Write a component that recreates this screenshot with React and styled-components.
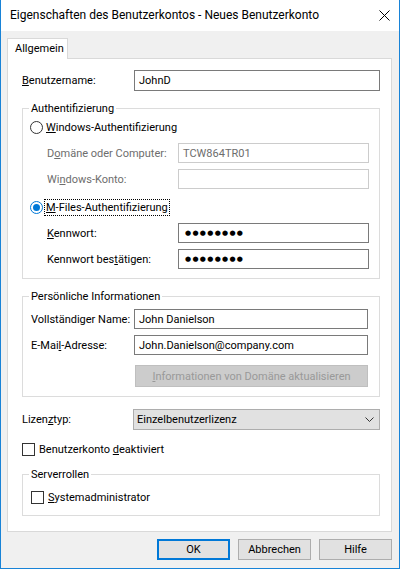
import React from 'react';
import styled, { createGlobalStyle } from 'styled-components';

const FS = '11px';

const GlobalStyle = createGlobalStyle`
  html, body { margin: 0; padding: 0; background: #ffffff; }
  body {
    font-family: Roboto, "Noto Sans", sans-serif;
    font-size: ${FS};
    color: #000;
  }
  * { box-sizing: border-box; }
`;

const Window = styled.div`
  width: 400px;
  height: 569px;
  border: 1px solid #1883d7;
  border-top: none;
  display: flex;
  flex-direction: column;
  background: #f0f0f0;
`;

const TitleBar = styled.div`
  height: 31px;
  flex: none;
  background: #ffffff;
  display: flex;
  align-items: center;
  justify-content: space-between;
  padding: 0 9px 1px 9px;
`;

const Title = styled.span`
  font-size: 12px;
  line-height: 15px;
  white-space: nowrap;
`;

const Body = styled.div`
  flex: 1;
  display: flex;
  flex-direction: column;
  padding: 7px 7px 8px 6px;
`;

const TabStrip = styled.div`
  display: flex;
`;

const Tab = styled.div`
  width: 61px;
  height: 21px;
  padding: 0 0 0 7px;
  line-height: 19px;
  white-space: nowrap;
  background: #ffffff;
  border: 1px solid #d9d9d9;
  border-bottom: none;
  margin-bottom: -1px;
  position: relative;
  z-index: 1;
`;

const Panel = styled.div`
  background: #ffffff;
  border: 1px solid #d9d9d9;
  padding: 0 11px 15px 14px;
  display: flex;
  flex-direction: column;
`;

const FormRow = styled.div`
  display: grid;
  grid-template-columns: ${p => p.$labelWidth}px 1fr;
  align-items: center;
  margin-top: ${p => p.$mt || 0}px;
  padding-left: ${p => p.$indent || 0}px;
`;

const Label = styled.span`
  line-height: 15px;
  white-space: nowrap;
  color: ${p => (p.$disabled ? '#6d6d6d' : '#000000')};
`;

const Key = styled.u`
  text-decoration: underline;
  text-underline-offset: 1px;
`;

const Field = styled.div`
  height: ${p => p.$h || 20}px;
  border: 1px solid ${p => (p.$disabled ? '#cccccc' : '#7a7a7a')};
  background: #ffffff;
  padding: 0 4px;
  display: flex;
  align-items: center;
  white-space: nowrap;
  overflow: hidden;
  color: ${p => (p.$disabled ? '#6d6d6d' : '#000000')};
`;

const Mask = styled.span`
  font-family: "DejaVu Sans", sans-serif;
  font-size: 7px;
  letter-spacing: 1.3px;
  padding-left: 2px;
`;

const Group = styled.fieldset`
  margin: ${p => p.$mt || 0}px 0 0 0;
  border: 1px solid #dcdcdc;
  padding: 0 ${p => p.$pr || 10}px ${p => p.$pb || 9}px 6px;
  min-width: 0;
`;

const Legend = styled.legend`
  padding: 0 2px;
  line-height: 15px;
  font-size: ${FS};
`;

const OptionRow = styled.div`
  display: flex;
  align-items: center;
  gap: ${p => p.$gap || 2}px;
  height: 15px;
  margin-top: ${p => p.$mt || 0}px;
  padding-left: ${p => p.$indent || 0}px;
`;

const Radio = styled.span`
  width: 13px;
  height: 13px;
  flex: none;
  border-radius: 50%;
  border: 1px solid ${p => (p.$checked ? '#0078d7' : '#333333')};
  background: #ffffff;
  display: flex;
  align-items: center;
  justify-content: center;
  &::after {
    content: '';
    width: 7px;
    height: 7px;
    border-radius: 50%;
    background: #0078d7;
    display: ${p => (p.$checked ? 'block' : 'none')};
  }
`;

const CheckBox = styled.span`
  width: 13px;
  height: 13px;
  flex: none;
  border: 1px solid #333333;
  background: #ffffff;
`;

const OptionText = styled.span`
  line-height: 15px;
  white-space: nowrap;
  padding: 0 1px;
  outline: ${p => (p.$focused ? '1px dotted #000000' : 'none')};
  outline-offset: 0;
`;

const ActionButton = styled.button`
  height: 22px;
  margin-left: 1px;
  font: inherit;
  font-size: ${FS};
  white-space: nowrap;
  background: #cccccc;
  border: 1px solid #bfbfbf;
  color: #999999;
  padding: 0;
`;

const Combo = styled.div`
  height: 21px;
  background: #e1e1e1;
  border: 1px solid #adadad;
  padding: 0 5px 0 3px;
  display: flex;
  align-items: center;
  justify-content: space-between;
`;

const ButtonBar = styled.div`
  display: flex;
  justify-content: flex-end;
  gap: 8px;
  margin-top: 7px;
`;

const Button = styled.button`
  width: 73px;
  height: 21px;
  padding: 0;
  font: inherit;
  font-size: ${FS};
  color: #000000;
  background: #e1e1e1;
  border: ${p => (p.$default ? '2px solid #0078d7' : '1px solid #adadad')};
`;

const CloseIcon = () => (
  <svg width="11" height="11" viewBox="0 0 11 11">
    <path d="M0.5 0.5 L10.5 10.5 M10.5 0.5 L0.5 10.5" stroke="#000" strokeWidth="1" fill="none" />
  </svg>
);

const Chevron = () => (
  <svg width="9" height="5" viewBox="0 0 9 5">
    <path d="M0.5 0.5 L4.5 4.5 L8.5 0.5" stroke="#333" strokeWidth="1" fill="none" />
  </svg>
);

export default function App() {
  return (
    <>
      <GlobalStyle />
      <Window>
        <TitleBar>
          <Title>Eigenschaften des Benutzerkontos - Neues Benutzerkonto</Title>
          <CloseIcon />
        </TitleBar>
        <Body>
          <TabStrip>
            <Tab>Allgemein</Tab>
          </TabStrip>
          <Panel>
            <FormRow $labelWidth={112} $mt={11}>
              <Label><Key>B</Key>enutzername:</Label>
              <Field $h={21}>JohnD</Field>
            </FormRow>

            <Group $mt={10} $pr={10} $pb={9}>
              <Legend>Authentifizierung</Legend>
              <OptionRow $mt={4} $indent={1}>
                <Radio />
                <OptionText><Key>W</Key>indows-Authentifizierung</OptionText>
              </OptionRow>
              <FormRow $labelWidth={131} $mt={8} $indent={18}>
                <Label $disabled>D<Key>o</Key>mäne oder Computer:</Label>
                <Field $disabled>TCW864TR01</Field>
              </FormRow>
              <FormRow $labelWidth={131} $mt={6} $indent={18}>
                <Label $disabled>Wi<Key>n</Key>dows-Konto:</Label>
                <Field $disabled />
              </FormRow>
              <OptionRow $mt={11} $indent={1}>
                <Radio $checked />
                <OptionText $focused><Key>M</Key>-Files-Authentifizierung</OptionText>
              </OptionRow>
              <FormRow $labelWidth={131} $mt={8} $indent={18}>
                <Label><Key>K</Key>ennwort:</Label>
                <Field><Mask>●●●●●●●●</Mask></Field>
              </FormRow>
              <FormRow $labelWidth={131} $mt={6} $indent={18}>
                <Label>Kennwort bes<Key>t</Key>ätigen:</Label>
                <Field><Mask>●●●●●●●●</Mask></Field>
              </FormRow>
            </Group>

            <Group $mt={10} $pr={11} $pb={9}>
              <Legend>Persönliche Informationen</Legend>
              <FormRow $labelWidth={103} $mt={5} $indent={2}>
                <Label>Vollständi<Key>g</Key>er Name:</Label>
                <Field>John Danielson</Field>
              </FormRow>
              <FormRow $labelWidth={103} $mt={6} $indent={2}>
                <Label>E-Mai<Key>l</Key>-Adresse:</Label>
                <Field>John.Danielson@company.com</Field>
              </FormRow>
              <FormRow $labelWidth={103} $mt={10} $indent={2}>
                <span />
                <ActionButton disabled><Key>I</Key>nformationen von Domäne aktualisieren</ActionButton>
              </FormRow>
            </Group>

            <FormRow $labelWidth={111} $mt={12}>
              <Label>Lizen<Key>z</Key>typ:</Label>
              <Combo>
                <span>Einzelbenutzerlizenz</span>
                <Chevron />
              </Combo>
            </FormRow>

            <OptionRow $mt={12} $gap={3}>
              <CheckBox />
              <OptionText>Benutzerkonto <Key>d</Key>eaktiviert</OptionText>
            </OptionRow>

            <Group $mt={10} $pr={10} $pb={10}>
              <Legend>Serverrollen</Legend>
              <OptionRow $mt={8} $gap={3} $indent={2}>
                <CheckBox />
                <OptionText><Key>S</Key>ystemadministrator</OptionText>
              </OptionRow>
            </Group>
          </Panel>
          <ButtonBar>
            <Button $default>OK</Button>
            <Button>Abbrechen</Button>
            <Button>Hilfe</Button>
          </ButtonBar>
        </Body>
      </Window>
    </>
  );
}
